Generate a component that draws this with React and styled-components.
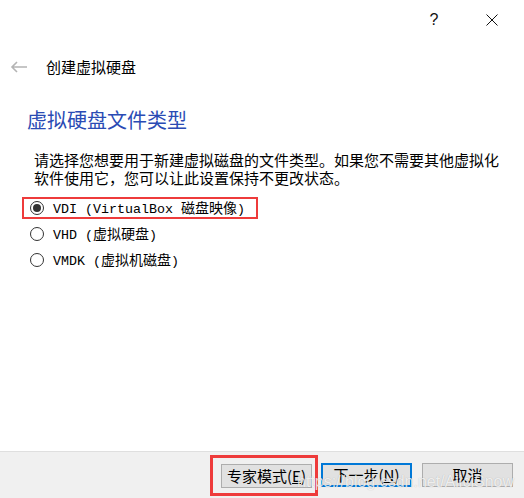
import React from "react";
import styled, { createGlobalStyle } from "styled-components";

const GlobalStyle = createGlobalStyle`
  * { box-sizing: border-box; }
  html, body { margin: 0; background: #ffffff; }
  body {
    font-family: "Noto Sans CJK SC", "Noto Sans", sans-serif;
    color: #000000;
  }
`;

const Dialog = styled.div`
  display: flex;
  flex-direction: column;
  min-height: 100vh;
  background: #ffffff;
`;

const TitleBar = styled.div`
  display: flex;
  justify-content: flex-end;
  align-items: center;
  gap: 12px;
  height: 40px;
  padding-right: 9px;
`;

const CaptionButton = styled.div`
  width: 46px;
  height: 40px;
  display: flex;
  align-items: center;
  justify-content: center;
  font-family: "Liberation Sans", sans-serif;
  font-size: 16px;
  color: #111111;
`;

const NavRow = styled.div`
  display: flex;
  align-items: center;
  height: 26px;
  margin-top: 14px;
  padding-left: 10px;
`;

const NavTitle = styled.span`
  margin-left: 18px;
  font-size: 15px;
  line-height: 26px;
  color: #000000;
`;

const Heading = styled.h1`
  margin: 28px 0 0;
  padding-left: 27px;
  font-size: 20px;
  line-height: 24px;
  font-weight: 400;
  color: #2a4bb4;
`;

const Description = styled.p`
  margin: 19px 0 0;
  padding-left: 34px;
  font-size: 15px;
  line-height: 18px;
  color: #000000;
`;

const RadioGroup = styled.div`
  display: flex;
  flex-direction: column;
  align-items: flex-start;
  gap: 4px;
  margin-top: 10px;
  padding-left: 22px;
`;

const RadioRow = styled.label`
  display: flex;
  align-items: center;
  height: 22px;
  padding: 0 11px 0 6px;
  border: 2px solid ${({ $marked }) => ($marked ? "#ee3b3b" : "transparent")};
`;

const RadioCircle = styled.span`
  width: 14px;
  height: 14px;
  border-radius: 50%;
  border: 1px solid #333333;
  background: #ffffff;
  display: flex;
  align-items: center;
  justify-content: center;
  margin-right: 9px;

  &::after {
    content: "";
    width: 8px;
    height: 8px;
    border-radius: 50%;
    background: ${({ $checked }) => ($checked ? "#333333" : "transparent")};
  }
`;

const RadioText = styled.span`
  font-family: "Liberation Mono", "Noto Sans CJK SC", monospace;
  font-size: 13.33px;
  line-height: 18px;
  white-space: pre;
`;

const Han = styled.span`
  font-family: "Noto Sans CJK SC", sans-serif;
  font-size: 14px;
`;

const Footer = styled.div`
  position: relative;
  margin-top: auto;
  height: 47px;
  display: flex;
  justify-content: flex-end;
  align-items: center;
  padding-right: 11px;
  background: #f0f0f0;
  border-top: 1px solid #dfdfdf;
`;

const Annotation = styled.div`
  display: flex;
  padding: 6px 3px 5px 8px;
  border: 3px solid #ee3b3b;
  margin-right: 3px;
`;

const Button = styled.button`
  width: 91px;
  height: 24px;
  padding: 0;
  margin-right: ${({ $gap }) => $gap || 0}px;
  background: #e1e1e1;
  border: ${({ $primary }) => ($primary ? "2px solid #0078d7" : "1px solid #adadad")};
  font-family: "Noto Sans CJK SC", sans-serif;
  font-size: 15px;
  line-height: 20px;
  color: #000000;
`;

const Key = styled.span`
  text-decoration: underline;
`;

const Watermark = styled.span`
  position: absolute;
  right: 10px;
  bottom: 7px;
  font-family: "Liberation Sans", sans-serif;
  font-size: 16px;
  color: rgba(255, 255, 255, 0.8);
  text-shadow: 0 0 1px rgba(0, 0, 0, 0.25);
  pointer-events: none;
`;

const BackArrow = () => (
  <svg width="18" height="12" viewBox="0 0 18 12">
    <path d="M17 6H2M7 1L2 6l5 5" fill="none" stroke="#b4b4b4" strokeWidth="1.6" />
  </svg>
);

const CloseIcon = () => (
  <svg width="12" height="12" viewBox="0 0 12 12">
    <path d="M0.5 0.5l11 11M11.5 0.5l-11 11" fill="none" stroke="#111" strokeWidth="1" />
  </svg>
);

const options = [
  { id: "vdi", latin: "VDI (VirtualBox ", han: "磁盘映像", checked: true },
  { id: "vhd", latin: "VHD (", han: "虚拟硬盘", checked: false },
  { id: "vmdk", latin: "VMDK (", han: "虚拟机磁盘", checked: false },
];

const App = () => {
  return (
    <Dialog>
      <GlobalStyle />
      <TitleBar>
        <CaptionButton>?</CaptionButton>
        <CaptionButton>
          <CloseIcon />
        </CaptionButton>
      </TitleBar>
      <NavRow>
        <BackArrow />
        <NavTitle>创建虚拟硬盘</NavTitle>
      </NavRow>
      <Heading>虚拟硬盘文件类型</Heading>
      <Description>
        请选择您想要用于新建虚拟磁盘的文件类型。如果您不需要其他虚拟化
        <br />
        软件使用它，您可以让此设置保持不更改状态。
      </Description>
      <RadioGroup>
        {options.map((o) => (
          <RadioRow key={o.id} $marked={o.checked}>
            <RadioCircle $checked={o.checked} />
            <RadioText>
              {o.latin}
              <Han>{o.han}</Han>)
            </RadioText>
          </RadioRow>
        ))}
      </RadioGroup>
      <Footer>
        <Annotation>
          <Button>
            专家模式(<Key>E</Key>)
          </Button>
        </Annotation>
        <Button $primary $gap={10}>
          下一步(<Key>N</Key>)
        </Button>
        <Button>取消</Button>
        <Watermark>https://blog.csdn.net/AliciSnow</Watermark>
      </Footer>
    </Dialog>
  );
};

export default App;
